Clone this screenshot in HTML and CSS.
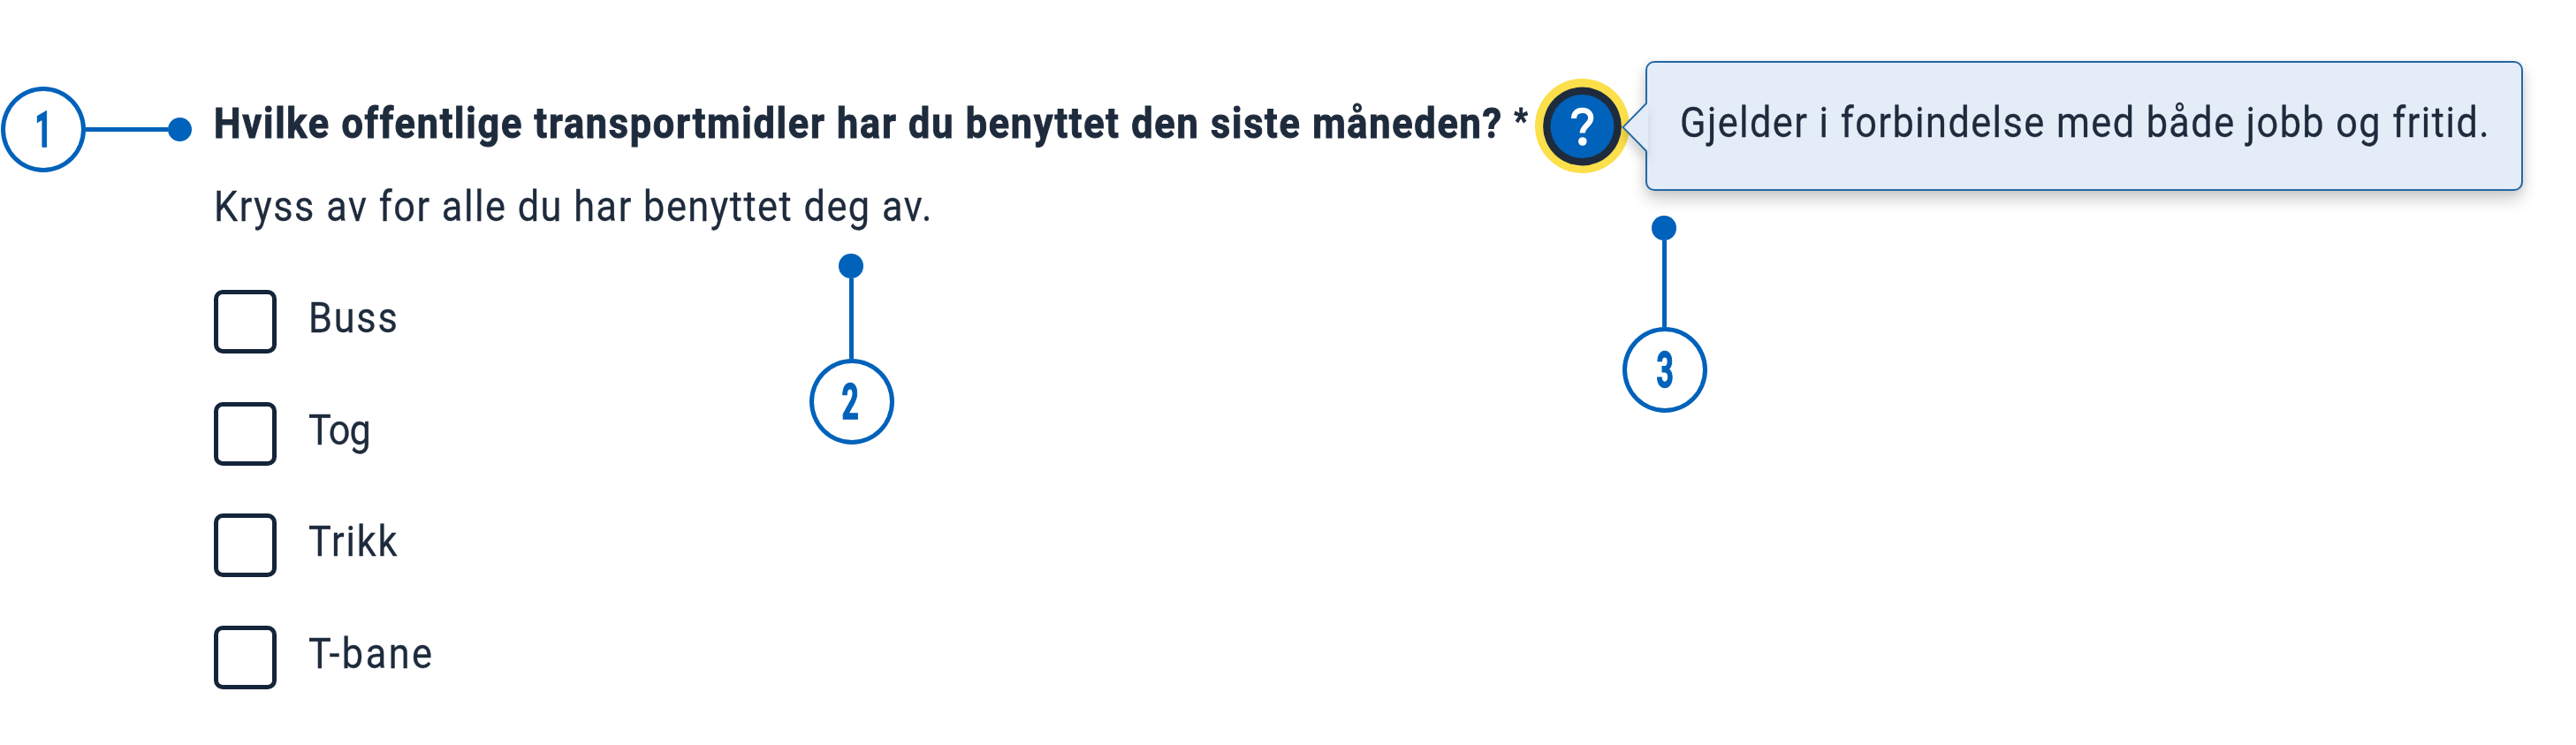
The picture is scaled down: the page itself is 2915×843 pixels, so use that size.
FILE: index.html
```html
<!DOCTYPE html>
<html lang="no">
<head>
<meta charset="utf-8">
<title>Reisevaner</title>
<link rel="stylesheet" href="styles.css">
</head>
<body>
<main class="page">
  <div class="callout callout-first"><span class="badge"><span class="digit">1</span></span><span class="line"></span><span class="dot"></span></div>
  <form class="question">
    <header class="question-head">
      <h1 class="title">Hvilke offentlige transportmidler har du benyttet den siste måneden? <span class="required">*</span></h1>
      <button class="help" type="button" aria-label="Hjelp">
        <svg class="help-icon" viewBox="0 0 107 107">
          <circle cx="53.5" cy="53.5" r="53.5" fill="#fbdf4b"/>
          <circle cx="53.5" cy="54" r="44.4" fill="#1e2b3c"/>
          <circle cx="53.5" cy="54" r="36" fill="#0062ba"/>
          <path d="M44 45C44 38.5 48 35.8 53.5 35.8C59.5 35.8 63.2 39.2 63.2 44.6C63.2 52 53.7 53.5 53.7 61.5" fill="none" stroke="#fff" stroke-width="6.2"/>
          <circle cx="53.8" cy="71" r="4.8" fill="#fff"/>
        </svg>
      </button>
      <div class="tooltip">
        <svg class="arrow" viewBox="0 0 30 58"><path d="M30 1.5L28.5 1.5L1.5 29L28.5 56.5L30 56.5Z" fill="#e4ecf8"/><path d="M28.5 1.5L1.5 29L28.5 56.5" fill="none" stroke="#2368a6" stroke-width="1.8"/></svg>
        <span class="tooltip-text">Gjelder i forbindelse med både jobb og fritid.</span>
      </div>
    </header>
    <p class="hint">Kryss av for alle du har benyttet deg av.</p>
    <div class="options">
      <label class="option"><span class="box"></span><span class="label">Buss</span></label>
      <label class="option"><span class="box"></span><span class="label tight">Tog</span></label>
      <label class="option"><span class="box"></span><span class="label">Trikk</span></label>
      <label class="option"><span class="box"></span><span class="label wide">T-bane</span></label>
    </div>
  </form>
  <div class="callout vertical callout-second"><span class="dot"></span><span class="line"></span><span class="badge"><span class="digit">2</span></span></div>
  <div class="callout vertical callout-third"><span class="dot"></span><span class="line"></span><span class="badge"><span class="digit">3</span></span></div>
</main>
</body>
</html>
```

FILE: styles.css
```css
* { box-sizing: border-box; }
body { margin: 0; background: #fff; color: #1e2b3c; font-family: Roboto, "Liberation Sans", sans-serif; font-size: 48px; }
.page { position: relative; display: flex; align-items: flex-start; width: 2915px; height: 843px; overflow: hidden; }
.callout { display: flex; align-items: center; color: #0062ba; }
.callout-first { width: 216px; margin: 98px 25px 0 1px; flex: none; }
.badge { display: flex; align-items: center; justify-content: center; flex: none; width: 96px; height: 97px; border: 5px solid #0062ba; border-radius: 50%; }
.digit { font-size: 56px; line-height: 64px; font-weight: 700; transform: scaleX(.6); -webkit-text-stroke: 1.5px #0062ba; }
.line { flex: 1; height: 5px; background: #0062ba; }
.dot { flex: none; width: 27.5px; height: 27.5px; border-radius: 50%; background: #0062ba; }
.vertical { position: absolute; flex-direction: column; width: 96px; }
.vertical .line { width: 5px; height: auto; }
.vertical .dot, .vertical .line { margin-right: 2px; }
.callout-second { left: 916px; top: 287px; height: 216px; }
.callout-second .digit { margin-right: 3px; }
.callout-third { left: 1836px; top: 244px; height: 223px; }
.question { padding-top: 69px; }
.question-head { display: flex; align-items: center; height: 147px; }
.title, .hint, .tooltip-text, .label { transform: scaleX(.9); transform-origin: left; white-space: nowrap; -webkit-text-stroke: .3px currentColor; }
.title { width: 1495px; margin: 0; font-size: 48px; line-height: 60px; font-weight: 700; letter-spacing: 1.98px; padding-bottom: 5px; -webkit-text-stroke: 1px currentColor; }
.required { font-size: 38px; line-height: 1; vertical-align: 6px; }
.help { flex: none; width: 107px; height: 107px; padding: 0; border: 0; background: none; }
.help-icon { display: block; width: 107px; height: 107px; }
.tooltip { position: relative; display: flex; align-items: center; width: 993px; height: 147px; margin-left: 18px; padding: 0 0 8px 37px; background: #e4ecf8; border: 2px solid #2368a6; border-radius: 10px; box-shadow: 0 10px 18px rgba(0,0,0,.18), 0 2px 12px rgba(0,0,0,.08); }
.arrow { position: absolute; left: -29px; top: 44px; width: 30px; height: 58px; filter: drop-shadow(-2px 8px 6px rgba(0,0,0,.15)); }
.tooltip-text { letter-spacing: 1.63px; }
.hint { margin: -12px 0 0; line-height: 60px; letter-spacing: 1.72px; }
.options { display: flex; flex-direction: column; gap: 54.5px; margin-top: 64px; }
.option { display: flex; align-items: center; height: 72px; gap: 36px; }
.box { width: 71px; height: 72px; border: 5px solid #14243a; border-radius: 10px; }
.label { line-height: 60px; padding-bottom: 8px; letter-spacing: 2px; }
.tight { letter-spacing: -1px; }
.wide { letter-spacing: 2.8px; }
```
